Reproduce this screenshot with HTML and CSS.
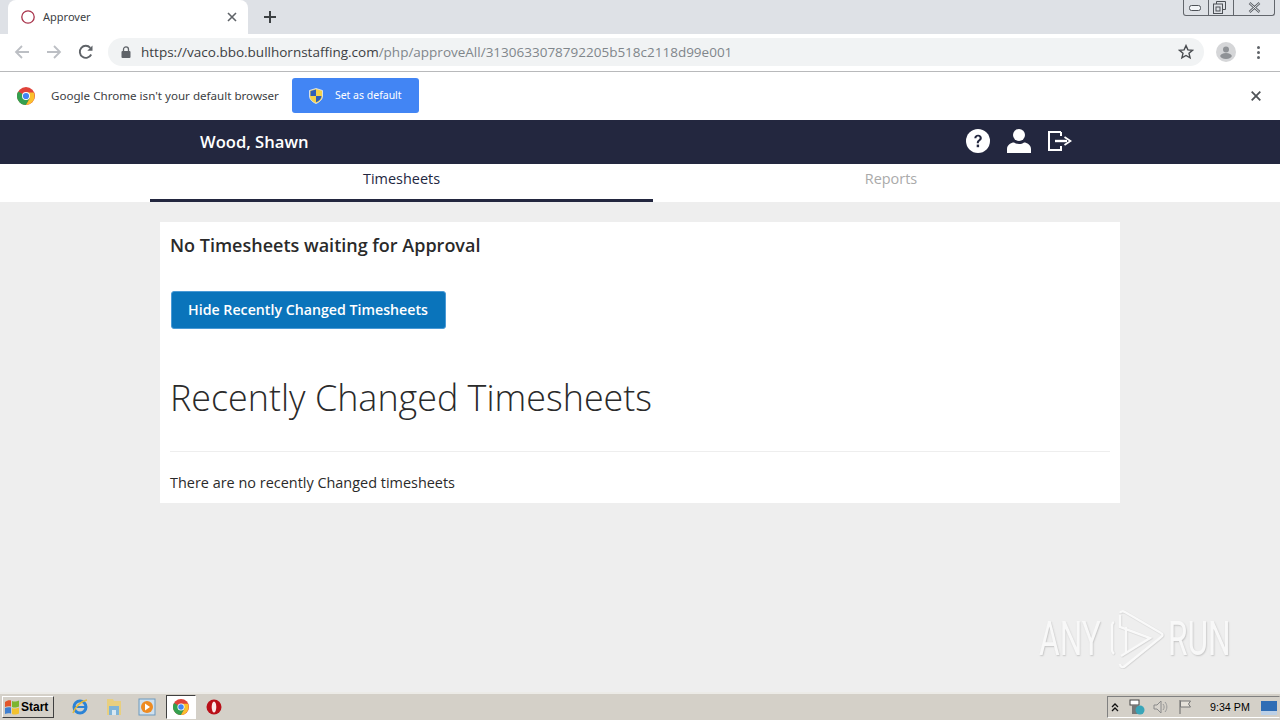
FILE: index.html
```html
<!DOCTYPE html>
<html lang="en">
<head>
  <meta charset="UTF-8" />
  <title>Approver</title>
  <link rel="stylesheet" href="styles.css">
</head>
<body>
  <!-- browser tab strip -->
  <div class="tabstrip">
    <div class="tab">
      <svg class="tab-icon" width="16" height="16" viewBox="0 0 16 16"><circle cx="8" cy="8" r="6.2" fill="none" stroke="#a8324a" stroke-width="1.3"/></svg>
      <span class="tab-title">Approver</span>
      <svg class="tab-close" width="10" height="10" viewBox="0 0 10 10"><path d="M1 1l8 8M9 1l-8 8" stroke="#5f6368" stroke-width="1.6"/></svg>
    </div>
    <svg class="new-tab" width="12" height="12" viewBox="0 0 12 12"><path d="M6 0v12M0 6h12" stroke="#3c4043" stroke-width="2"/></svg>
    <div class="win-buttons">
      <span class="win-btn win-min"><svg width="12" height="6" viewBox="0 0 12 6"><rect x="0.5" y="0.5" width="11" height="5" rx="2" fill="#f2f4f7" stroke="#4d5157"/></svg></span>
      <span class="win-btn win-max"><svg width="13" height="13" viewBox="0 0 13 13"><path d="M3.5 3V.5h9v8H10" fill="none" stroke="#4d5157"/><rect x="0.5" y="3" width="9" height="9.5" fill="none" stroke="#4d5157"/><rect x="3" y="6" width="4" height="4" fill="none" stroke="#4d5157"/></svg></span>
      <span class="win-btn win-close"><svg width="13" height="11" viewBox="0 0 13 11"><path d="M1.5 1l10 9M11.500 1l-10 9" stroke="#5a5e64" stroke-width="2.4"/><path d="M1.5 1l10 9M11.500 1l-10 9" stroke="#e8ebef" stroke-width="1"/></svg></span>
    </div>
  </div>

  <!-- address bar -->
  <div class="toolbar">
    <svg class="nav-icon" width="16" height="16" viewBox="0 0 16 16"><path d="M15 8H2M8 2L2 8l6 6" fill="none" stroke="#bcbfc4" stroke-width="1.8"/></svg>
    <svg class="nav-icon" width="16" height="16" viewBox="0 0 16 16"><path d="M1 8h13M8 2l6 6-6 6" fill="none" stroke="#bcbfc4" stroke-width="1.8"/></svg>
    <svg class="nav-icon" width="16" height="16" viewBox="0 0 16 16"><path d="M13.2 10.5A6 6 0 1 1 12.3 3.8" fill="none" stroke="#5f6368" stroke-width="1.9"/><path d="M14.5 1.5v5.2H9.300z" fill="#5f6368"/></svg>
    <div class="omnibox">
      <svg class="lock" width="10" height="12" viewBox="0 0 10 12"><path d="M2.5 5V3.4a2.5 2.5 0 0 1 5 0V5" fill="none" stroke="#5f6368" stroke-width="1.3"/><rect x="0.5" y="5" width="9" height="7" rx="1" fill="#5f6368"/></svg>
      <span class="url"><span class="url-host">https://vaco.bbo.bullhornstaffing.com</span>/php/approveAll/3130633078792205b518c2118d99e001</span>
      <svg class="star" width="16" height="16" viewBox="0 0 16 16"><path d="M8 1.6l1.9 4.3 4.6.4-3.5 3 1.1 4.600L8 11.500l-4.100 2.400L5 9.300l-3.500-3 4.600-.4z" fill="none" stroke="#494c50" stroke-width="1.4"/></svg>
    </div>
    <svg class="avatar" width="20" height="20" viewBox="0 0 20 20"><circle cx="10" cy="10" r="10" fill="#d5d6d8"/><circle cx="10" cy="7.500" r="3" fill="#8f9296"/><ellipse cx="10" cy="14" rx="5.800" ry="2.900" fill="#8f9296"/></svg>
    <div class="menu-dots"><i></i><i></i><i></i></div>
  </div>

  <!-- default browser notice -->
  <div class="infobar">
    <svg class="chrome-logo" width="18" height="18" viewBox="0 0 18 18">
      <circle cx="9" cy="9" r="9" fill="#e0433a"/>
      <path d="M9 9L1.200 4.500A9 9 0 0 0 9 18l4.500-7.800z" fill="#34a04f"/>
      <path d="M9 5.400h7.800A9 9 0 0 1 9 18l4-7z" fill="#fbc02d"/>
      <circle cx="9" cy="9" r="4" fill="#fff"/>
      <circle cx="9" cy="9" r="3.100" fill="#4285f4"/>
    </svg>
    <span class="infobar-text">Google Chrome isn't your default browser</span>
    <button class="default-btn">
      <svg width="14" height="16" viewBox="0 0 14 16"><path d="M7 .5L13.500 2.500V8c0 3.500-3 6-6.500 7.500C3.500 14 .5 11.500.5 8V2.500z" fill="#f4d24a" stroke="#e8edf8" stroke-width=".8"/><path d="M7 1.500V8H1.500V3zM7 8h5.500c0 2.800-2.500 5-5.500 6.300z" fill="#2f5fb8"/></svg>
      <span class="default-label">Set as default</span>
    </button>
    <svg class="infobar-close" width="10" height="10" viewBox="0 0 10 10"><path d="M.7.7l8.600 8.600M9.300.7L.7 9.300" stroke="#4f5357" stroke-width="1.800"/></svg>
  </div>

  <!-- the site itself -->
  <header class="site-header">
    <span class="user-name">Wood, Shawn</span>
    <div class="header-icons">
      <svg width="24" height="24" viewBox="0 0 24 24"><circle cx="12" cy="12" r="12" fill="#fff"/><path d="M8.300 9.300c0-2.200 1.600-3.600 3.800-3.600s3.700 1.300 3.700 3.300c0 2.800-3 2.700-3 5.200h-2c0-3.500 2.900-3.400 2.900-5.100 0-.8-.7-1.500-1.600-1.500-1 0-1.700.7-1.700 1.700z" fill="#23273f"/><rect x="10.700" y="15.600" width="2.400" height="2.600" fill="#23273f"/></svg>
      <svg width="24" height="24" viewBox="0 0 24 24"><circle cx="12" cy="6" r="6" fill="#fff"/><path d="M0 24v-4c0-4 4-6.500 7-6.500 1.500 1 3 1.500 5 1.500s3.500-.5 5-1.500c3 0 7 2.500 7 6.500v4z" fill="#fff"/></svg>
      <svg width="24" height="20" viewBox="0 0 24 20"><path d="M13 1H1v18h12v-4M13 1v4" fill="none" stroke="#fff" stroke-width="2"/><path d="M7 10h12" stroke="#fff" stroke-width="2.400"/><path d="M16.500 6l6 4-6 4" fill="none" stroke="#fff" stroke-width="1.800"/></svg>
    </div>
  </header>

  <nav class="tabs">
    <a class="tab-link active" href="#">Timesheets</a>
    <a class="tab-link" href="#">Reports</a>
  </nav>

  <main class="content">
    <div class="card">
      <h4 class="no-sheets">No Timesheets waiting for Approval</h4>
      <button class="hide-btn">Hide Recently Changed Timesheets</button>
      <h1 class="recent-title">Recently Changed Timesheets</h1>
      <hr class="divider">
      <p class="recent-empty">There are no recently Changed timesheets</p>
    </div>
    <!-- watermark -->
    <div class="watermark">
      <span class="mark-word">ANY</span>
      <svg class="mark-logo" width="60" height="62" viewBox="0 0 60 62">
        <g fill="none" stroke="#f9f9f9" stroke-width="2.500" filter="url(#mark-shadow)">
          <path d="M6 15c-2 1-2 2-2 4v24c0 2 1 3 2 4"/>
          <path d="M12 6c1-2 3-2 5-1l36 21c2 1 2 3 0 4L17 59c-2 2-5 1-5-2"/>
          <path d="M12 8v12l30 11-29 18"/>
          <path d="M18 20v26"/>
        </g>
        <filter id="mark-shadow"><feDropShadow dx="0.500" dy="0.500" stdDeviation="0.700" flood-color="#c8c8c8"/></filter>
      </svg>
      <span class="mark-word">RUN</span>
    </div>
  </main>

  <!-- windows taskbar -->
  <footer class="taskbar">
    <button class="start-btn">
      <svg width="16" height="16" viewBox="0 0 16 16"><path d="M1 3c2-1.500 4-2 6-1.500v6C5 7 3 7 1 8z" fill="#e2562b"/><path d="M8 2c2 .8 4 1 7-.5v6c-3 1.500-5 1.200-7 .5z" fill="#7db52f"/><path d="M1 9c2-1 4-1 6-.5v6C5 14 3 14 1 15z" fill="#3f7fd0"/><path d="M8 9c2 .8 4 1 7-.5v6c-3 1.500-5 1.200-7 .5z" fill="#f2c230"/></svg>
      Start
    </button>
    <div class="quick-launch">
      <span class="task-item"><svg width="18" height="18" viewBox="0 0 18 18"><circle cx="9" cy="9" r="6" fill="none" stroke="#2b83d6" stroke-width="3"/><path d="M4 9h10" stroke="#2b83d6" stroke-width="2"/><path d="M2 15c2-6 8-12 14-13" fill="none" stroke="#e5b93a" stroke-width="1.500"/></svg></span>
      <span class="task-item"><svg width="18" height="18" viewBox="0 0 18 18"><path d="M2 1h6l1 2h7v14H2z" fill="#e8cf7f"/><rect x="4" y="8" width="10" height="9" fill="#7fb4d8"/><rect x="7" y="12" width="4" height="5" fill="#d8e8f2"/></svg></span>
      <span class="task-item"><svg width="18" height="18" viewBox="0 0 18 18"><rect x="1" y="1" width="16" height="16" fill="#cfe0ee" stroke="#6d99bd"/><circle cx="9" cy="9" r="6" fill="#ee8b22"/><path d="M7 5.500v7l5-3.500z" fill="#fff"/></svg></span>
      <span class="task-item task-active"><svg width="16" height="16" viewBox="0 0 18 18"><circle cx="9" cy="9" r="9" fill="#e0433a"/><path d="M9 9L1.200 4.500A9 9 0 0 0 9 18l4.500-7.800z" fill="#34a04f"/><path d="M9 5.400h7.800A9 9 0 0 1 9 18l4-7z" fill="#fbc02d"/><circle cx="9" cy="9" r="4" fill="#fff"/><circle cx="9" cy="9" r="3.100" fill="#4285f4"/></svg></span>
      <span class="task-item"><svg width="16" height="16" viewBox="0 0 16 16"><circle cx="8" cy="8" r="7.500" fill="#b90f18"/><ellipse cx="8" cy="8" rx="2.300" ry="5.500" fill="#fbeaea"/></svg></span>
    </div>
    <div class="tray">
      <svg width="8" height="9" viewBox="0 0 8 9"><path d="M1 4l3-3 3 3M1 8l3-3 3 3" fill="none" stroke="#111" stroke-width="1.300"/></svg>
      <svg class="tray-net" width="16" height="16" viewBox="0 0 16 16"><rect x="1" y="1" width="9" height="5" fill="#fff" stroke="#444"/><rect x="3" y="6" width="7" height="9" fill="#777"/><circle cx="11" cy="11" r="4.500" fill="#39a5b8"/></svg>
      <svg width="16" height="16" viewBox="0 0 16 16"><path d="M1 6h3l4-4v12l-4-4H1z" fill="#d8d4cd" stroke="#8a8a8a"/><path d="M10 5c1.500 2 1.500 4 0 6M12 3c2.500 3 2.500 7 0 10" fill="none" stroke="#9a9a9a"/></svg>
      <svg class="tray-flag" width="16" height="16" viewBox="0 0 16 16"><path d="M2 1v14" stroke="#666"/><path d="M2.500 2h10l-2 3 2 3h-10z" fill="#e6e2da" stroke="#777"/></svg>
      <span class="clock">9:34 PM</span>
      <svg class="show-desktop" width="16" height="14" viewBox="0 0 16 14"><rect width="16" height="14" fill="#2f6db5"/><rect y="10" width="16" height="4" fill="#bcd0e6"/></svg>
    </div>
  </footer>
</body>
</html>
```
FILE: styles.css
```css
html, body {
  margin: 0;
  padding: 0;
  height: 720px;
  overflow: hidden;
}
body {
  display: flex;
  flex-direction: column;
  font-family: "Open Sans", sans-serif;
  background-color: #eee;
}

/* browser chrome */
.tabstrip {
  height: 34px;
  flex: none;
  display: flex;
  align-items: flex-end;
  background-color: #dee1e6;
  padding-left: 8px;
  position: relative;
}
.tab {
  width: 240px;
  height: 34px;
  box-sizing: border-box;
  display: flex;
  align-items: center;
  background-color: #fff;
  border-radius: 8px 8px 0 0;
  padding: 0 11px 0 12px;
}
.tab-title {
  margin-left: 7px;
  padding-bottom: 2px;
  font: 11px "Noto Sans", sans-serif;
  color: #3c4043;
  flex: 1;
}
.new-tab {
  margin: 0 0 11px 16px;
}
.win-buttons {
  position: absolute;
  top: 0;
  left: 1183px;
  width: 92px;
  height: 16px;
  box-sizing: border-box;
  display: flex;
  border: 1px solid #62666c;
  border-top: none;
  border-radius: 0 0 3px 3px;
}
.win-btn {
  display: flex;
  align-items: center;
  justify-content: center;
  border-right: 1px solid #62666c;
  height: 15px;
  box-sizing: border-box;
}
.win-min { width: 25px; padding-right: 2px; }
.win-max { width: 25px; padding-right: 3px; }
.win-close { flex: 1; border-right: none; }

.toolbar {
  height: 36px;
  padding: 0 0 1px 14px;
  flex: none;
  display: flex;
  align-items: center;
  background-color: #fff;
  border-bottom: 1px solid #b8b9bb;
}
.nav-icon {
  margin-right: 16px;
}
.omnibox {
  width: 1096px;
  height: 28px;
  margin-left: -2px;
  display: flex;
  align-items: center;
  background-color: #f1f3f4;
  border-radius: 14px;
  padding: 0 10px 0 13px;
  box-sizing: border-box;
}
.url {
  margin-left: 10px;
  flex: 1;
  font: 13.5px "Open Sans", sans-serif;
  color: #80868b;
  white-space: nowrap;
}
.url-host {
  color: #3c4043;
}
.avatar {
  margin-left: 12px;
}
.menu-dots {
  margin-left: 21px;
  display: flex;
  flex-direction: column;
  gap: 2px;
}
.menu-dots i {
  width: 3px;
  height: 3px;
  background-color: #5f6368;
  border-radius: 50%;
}

.infobar {
  height: 47px;
  flex: none;
  display: flex;
  align-items: center;
  background-color: #fff;
  padding: 0 19px 1px 17px;
}
.chrome-logo,
.infobar-close {
  margin-top: 1px;
}
.infobar-text {
  margin-left: 16px;
  font: 11.6px "Noto Sans", sans-serif;
  color: #3c4043;
}
.default-btn {
  margin-left: 13px;
  width: 127px;
  height: 35px;
  display: flex;
  align-items: center;
  gap: 12px;
  padding: 0 0 0 17px;
  background-color: #4285f4;
  color: #fff;
  border: none;
  border-radius: 3px;
  font: 10.5px "Noto Sans", sans-serif;
}
.default-label {
  padding-bottom: 2px;
}
.infobar-close {
  margin-left: auto;
}

/* site header */
.site-header {
  height: 44px;
  flex: none;
  display: flex;
  align-items: center;
  background-color: #23273f;
  padding-left: 200px;
}
.user-name {
  font-size: 16.6px;
  font-weight: 600;
  color: #fff;
  padding-bottom: 2px;
}
.header-icons {
  margin-left: 658px;
  display: flex;
  align-items: center;
  gap: 17px;
  margin-top: -3px;
}
.tabs {
  height: 38px;
  flex: none;
  display: flex;
  background-color: #fff;
  padding: 0 151px 0 150px;
}
.tab-link {
  flex: 1;
  box-sizing: border-box;
  text-align: center;
  font-size: 14.45px;
  line-height: 30px;
  color: #aaa;
  text-decoration: none;
}
.tab-link.active {
  flex: none;
  width: 503px;
  color: #23273f;
  border-bottom: 3px solid #23273f;
}

.content {
  flex: 1;
  position: relative;
  padding: 20px 160px 0;
}
.card {
  background-color: #fff;
  height: 281px;
  box-sizing: border-box;
  padding: 11px 10px 0;
  color: #2a2a2a;
}
.no-sheets {
  margin: 0;
  font-size: 18px;
  line-height: 24px;
  font-weight: 600;
}
.hide-btn {
  display: block;
  margin: 34px 0 0 1px;
  padding: 0 1px 2px 0;
  width: 275px;
  height: 38px;
  background-color: #0a74bb;
  border: 1px solid #4a9ad6;
  border-radius: 3px;
  color: #fff;
  font: 600 14.2px "Open Sans", sans-serif;
}
.recent-title {
  margin: 44px 0 0;
  font-size: 35.9px;
  line-height: 50px;
  font-weight: 300;
}
.divider {
  margin: 28px 0 0;
  border: none;
  border-top: 1px solid #eee;
}
.recent-empty {
  margin: 21px 0 0;
  font-size: 14.45px;
  line-height: 20px;
}
.watermark {
  position: absolute;
  left: 1039px;
  top: 405px;
  display: flex;
  align-items: center;
}
.mark-word {
  width: 69px;
  font: 400 48px "Roboto", sans-serif;
  color: #f8f8f8;
  text-shadow: 1px 1px 2px #c4c4c4;
  transform: scaleX(.66);
  transform-origin: left center;
}

/* windows taskbar */
.taskbar {
  height: 28px;
  flex: none;
  box-sizing: border-box;
  display: flex;
  align-items: center;
  background-color: #d4d0c8;
  border-top: 2px solid #ecebe7;
  padding: 0 0 0 2px;
}
.start-btn {
  width: 52px;
  height: 22px;
  display: flex;
  align-items: center;
  gap: 1px;
  padding: 0 0 0 1px;
  background-color: #d4d0c8;
  border: 1px solid;
  border-color: #fff #404040 #404040 #fff;
  font: bold 12px "Liberation Sans", sans-serif;
  color: #000;
}
.quick-launch {
  margin-left: 11px;
  display: flex;
  align-items: center;
  gap: 3.5px;
}
.task-item {
  width: 30px;
  height: 24px;
  display: flex;
  align-items: center;
  justify-content: center;
}
.task-active {
  background-color: #fff;
  border: 1px solid;
  border-color: #404040 #fff #fff #404040;
  box-sizing: border-box;
}
.tray {
  margin-left: auto;
  width: 173px;
  height: 22px;
  box-sizing: border-box;
  display: flex;
  align-items: center;
  gap: 8px;
  padding-left: 3px;
  border: 1px solid;
  border-color: #808080 #d4d0c8 #fff #808080;
}
.tray-net {
  margin-left: 2px;
}
.tray-flag {
  margin-left: 1px;
}
.clock {
  margin-left: 8px;
  font: 10.7px "Liberation Sans", sans-serif;
  color: #000;
  white-space: nowrap;
}
.show-desktop {
  margin: 2px 0 0 3px;
}
```
